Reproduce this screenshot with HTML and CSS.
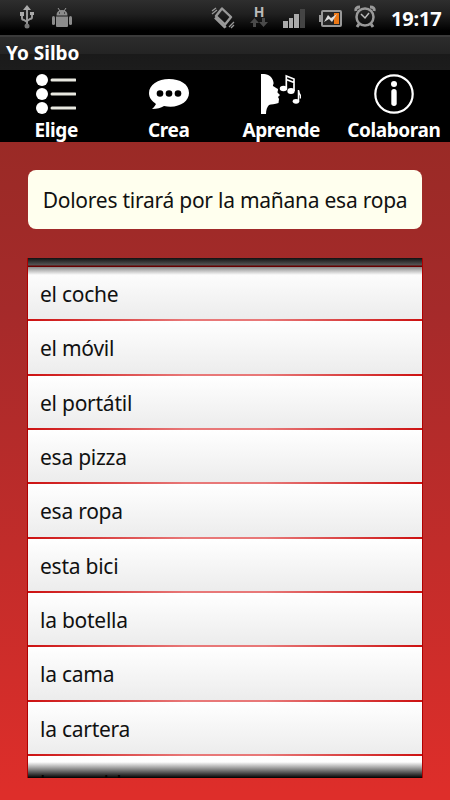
FILE: index.html
```html
<!DOCTYPE html>
<html lang="es">
<head>
    <meta charset="UTF-8">
    <meta name="viewport" content="width=device-width, initial-scale=1.0">
    <title>Yo Silbo</title>
    <link rel="stylesheet" href="styles.css">
</head>
<body>
    <header id="status">
        <svg class="usb" width="14" height="24" viewBox="0 0 14 24" fill="none" stroke="#999" stroke-width="2">
            <path d="M7 4V20M2 9v4q0 2 2 2l3 2M12 9v3q0 2-2 2l-3 2"/>
            <path d="M7 0L11 5H3zM0 7h4v4H0zM10 7h4v3h-4z" fill="#aaa" stroke="none"/>
            <circle cx="7" cy="21" r="2.5" fill="#777" stroke="none"/>
        </svg>
        <svg class="robot" width="20" height="20" viewBox="0 0 20 20" fill="#8c8c8c">
            <path d="M4.500 7.500q0-5.500 5.500-5.500t5.500 5.500zM4 8.500h12V18q0 1-1 1H5q-1 0-1-1z"/>
            <path d="M6 0l2 3M14 0l-2 3" stroke="#999"/>
            <rect y="8" width="3" height="9" rx="1.5"/>
            <rect x="17" y="8" width="3" height="9" rx="1.5"/>
            <path d="M7 4.500h1v1H7zM12 4.500h1v1h-1z" fill="#111"/>
        </svg>
        <svg class="vibrate" width="24" height="22" viewBox="0 0 24 22" fill="none" stroke="#999">
            <path d="M11 1.500L20 10 14 17.500 5 9z" stroke-width="2.400" stroke-linejoin="round"/>
            <path d="M4 10.500l9.500 9.500 1.500-1" stroke-width="2.500"/>
            <path d="M1 4l4-3M1 7l5-4M18 20l5-5M20 21l3-3" stroke-width="1.300"/>
        </svg>
        <div class="net">
            <b>H</b>
            <svg width="18" height="10" viewBox="0 0 18 10" fill="#4a4a4a">
                <path d="M4.500 0L9 5H6v4H3V5H0zM12 0h3v4h3l-4.500 5L9 4h3z"/>
            </svg>
        </div>
        <svg class="signal" width="22" height="20" viewBox="0 0 22 20" fill="#aaa">
            <path d="M0 12h5v7H0zM6 9h4v10H6zM11 5h5v14h-5z"/>
            <path d="M17 0h5v19h-5z" fill="#444"/>
        </svg>
        <svg class="battery" width="23" height="17" viewBox="0 0 23 17">
            <rect x="3" y="1" width="19" height="15" rx="1" fill="#262626" stroke="#999" stroke-width="2"/>
            <path d="M0 5h2v7H0z" fill="#999"/>
            <path d="M15 3h5v11h-5z" fill="#ee7815"/>
            <path d="M5 12l4-7 3 3 6-4-5 8-3-3z" fill="#ddd"/>
        </svg>
        <svg class="alarm" width="22" height="24" viewBox="0 0 22 24" fill="none" stroke="#999" stroke-width="2">
            <circle cx="11" cy="12" r="8.500" stroke-width="2.500"/>
            <path d="M2 6q-1-4 4-4M20 6q1-4-4-4M5 19l-2 3M17 19l2 3" stroke-width="3"/>
            <path d="M7 9l4 4 4-5" stroke="#bbb" stroke-width="1.500"/>
        </svg>
        <span id="clock">19:17</span>
    </header>
    <h1 id="title">Yo Silbo</h1>
    <nav id="tabs">
        <a class="tab">
            <svg width="40" height="40" viewBox="0 0 40 40" fill="#fff">
                <circle cx="6" cy="6" r="6"/><circle cx="6" cy="20" r="6"/><circle cx="6" cy="34" r="6"/>
                <path d="M16 6h23M16 20h23M16 34h23" stroke="#e8e8e0" stroke-width="3" stroke-linecap="round"/>
            </svg>
            <span>Elige</span>
        </a>
        <a class="tab">
            <svg width="40" height="40" viewBox="0 0 40 40" fill="#fff">
                <path d="M20 5C9 5 0 11 0 19c0 5 3 8 7 11-1 2-2 3-4 5 5 0 9-1 12-3 14 3 25-4 25-13S31 5 20 5z"/>
                <g fill="#000"><circle cx="11" cy="19.500" r="3.300"/><circle cx="20" cy="19.500" r="3.300"/><circle cx="29" cy="19.500" r="3.300"/></g>
            </svg>
            <span>Crea</span>
        </a>
        <a class="tab">
            <svg width="40" height="40" viewBox="0 0 40 40" fill="#fff">
                <path d="M0 0H3C8 0 12 4 12.500 8.500 13 10 11.500 11 12 12L16 14.500C18 15 16.500 17 16.500 18.500L19 21 17 23 18 25 17.500 29C14 30.500 10 30 8 31 6 33 5 36 5 40H0z"/>
                <ellipse cx="22.500" cy="14.500" rx="3.700" ry="2.800"/>
                <ellipse cx="30" cy="17" rx="3.700" ry="2.900"/>
                <ellipse cx="35" cy="27.300" rx="3.300" ry="2.400"/>
                <path d="M25.300 14V2l7.700 3v12M25.300 5.500L33 8.500" fill="none" stroke="#fff" stroke-width="1.700"/>
                <path d="M37.500 27V16q.5 4 2 5.500v3" fill="none" stroke="#fff" stroke-width="1.500"/>
            </svg>
            <span>Aprende</span>
        </a>
        <a class="tab">
            <svg width="40" height="40" viewBox="0 0 40 40" fill="#fff">
                <circle cx="20" cy="20" r="18.700" fill="none" stroke="#fff" stroke-width="2.200"/>
                <circle cx="20" cy="10" r="3"/>
                <rect x="17.300" y="15" width="5.400" height="17" rx="2.700"/>
            </svg>
            <span>Colaboran</span>
        </a>
    </nav>
    <main>
        <p id="phrase">Dolores tirará por la mañana esa ropa</p>
        <div id="list">
            <ul>
                <li>el coche</li>
                <li>el móvil</li>
                <li>el portátil</li>
                <li>esa pizza</li>
                <li>esa ropa</li>
                <li>esta bici</li>
                <li>la botella</li>
                <li>la cama</li>
                <li>la cartera</li>
                <li>la comida</li>
            </ul>
        </div>
    </main>
</body>
</html>
```
FILE: styles.css
```css
*{
    box-sizing: border-box;
}
body{
    margin: 0;
    height: 800px;
    overflow: hidden;
    display: flex;
    flex-direction: column;
    background-color: #000;
    font-family: "Noto Sans", "Open Sans", sans-serif;
}
svg{
    display: block;
    flex: none;
}
#status{
    height: 35px;
    flex: none;
    display: flex;
    align-items: flex-start;
    padding-left: 20px;
    background: linear-gradient(#2e2e2e, #202020 40%, #000 88%);
    color: #fff;
}
.usb{
    margin-top: 5px;
}
.robot{
    margin: 8px 0 0 18px;
}
.vibrate{
    margin: 7px 0 0 139px;
}
.net{
    width: 18px;
    margin: 6px 0 0 15px;
    text-align: center;
}
.net b{
    display: block;
    font-size: 14px;
    line-height: 12px;
    color: #bbb;
}
.signal{
    margin: 9px 0 0 15px;
}
.battery{
    margin: 10px 0 0 14px;
}
.alarm{
    margin: 5px 0 0 12px;
}
#clock{
    margin-left: 15px;
    font-size: 20px;
    font-weight: bold;
    line-height: 37px;
    letter-spacing: -0.2px;
}
#title{
    height: 35px;
    flex: none;
    margin: 0;
    padding-left: 6px;
    border-top: 2px solid #3a3a3a;
    background: linear-gradient(#2c2c2c, #242424 50%, #1a1a1a 52%, #1c1c1c);
    color: #fff;
    font-size: 19px;
    line-height: 33px;
}
#tabs{
    height: 72px;
    flex: none;
    display: grid;
    grid-template-columns: repeat(4, 1fr);
    padding-top: 4px;
}
.tab{
    display: flex;
    flex-direction: column;
    align-items: center;
    color: #fff;
    font-size: 19px;
    font-weight: bold;
    line-height: 32px;
    letter-spacing: -0.4px;
    white-space: nowrap;
}
main{
    flex: 1;
    padding: 28px;
    background: linear-gradient(#9a2a26, #a52a2a 25%, #de2e2a 98%);
}
#phrase{
    height: 59px;
    margin: 0 0 29px;
    border-radius: 8px;
    background-color: #ffffee;
    color: #111;
    font-size: 21px;
    line-height: 60px;
    letter-spacing: -0.25px;
    text-align: center;
    white-space: nowrap;
}
#list{
    position: relative;
    height: 520px;
    padding-top: 9px;
    overflow: hidden;
    box-shadow: 1px 0 #b00000, -1px 0 #b00000;
    background: linear-gradient(#111, #555 7px, #600 8px, #600 9px, transparent 9px);
}
#list::before, #list::after{
    content: "";
    position: absolute;
    left: 0;
    right: 0;
}
#list::before{
    top: 9px;
    height: 8px;
    background: linear-gradient(#0007, #0000);
}
#list::after{
    bottom: 0;
    height: 16px;
    background: linear-gradient(#0000, #000);
}
ul{
    list-style: none;
    margin: 0;
    padding: 0;
}
li{
    height: 54.35px;
    padding-left: 12px;
    border-bottom: 2px solid;
    border-image: linear-gradient(90deg, #cc1010, #e87878 40%, #e87878 60%, #cc1010) 2;
    background: linear-gradient(#fff, #ececec);
    color: #111;
    font-size: 21px;
    line-height: 54px;
    letter-spacing: -0.25px;
}
```
